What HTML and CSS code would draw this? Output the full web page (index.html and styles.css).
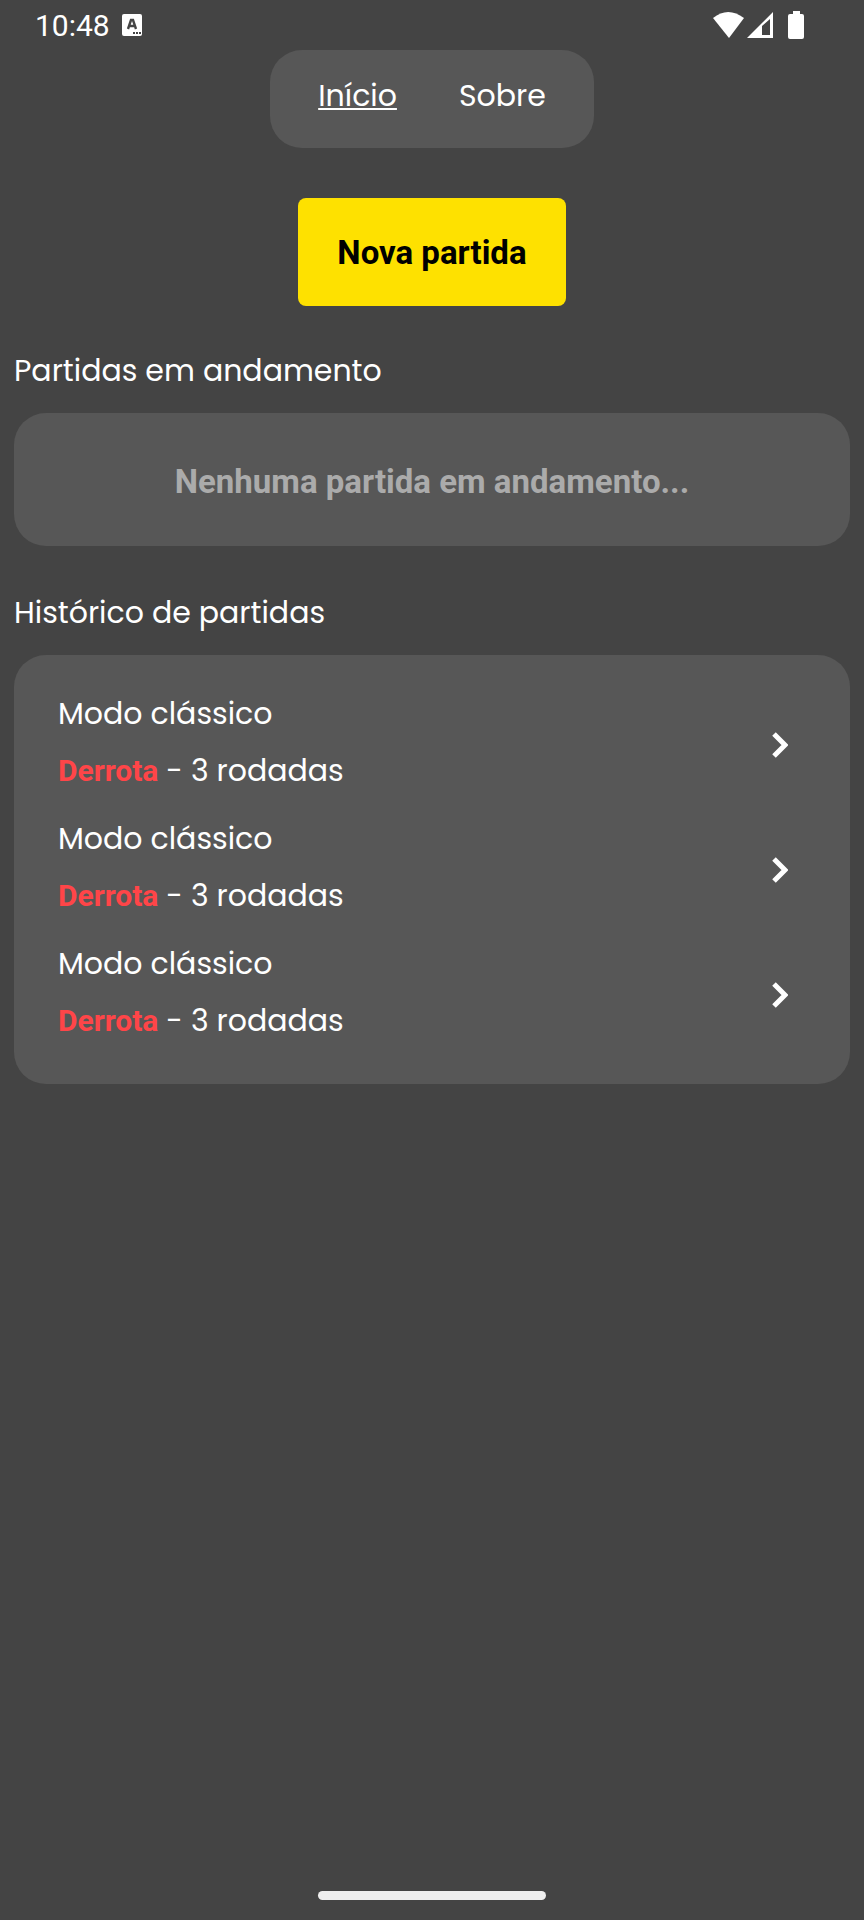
FILE: index.html
```
<!DOCTYPE html>
<html lang="pt-BR">
<head>
    <meta charset="UTF-8">
    <meta name="viewport" content="width=device-width, initial-scale=1.0">
    <title>Partidas</title>
    <link rel="stylesheet" href="styles.css">
</head>
<body>

<div class="status-bar">
    <span class="clock">10:48</span>
    <svg class="status-app" width="20" height="22" viewBox="0 0 20 22" aria-hidden="true">
        <rect width="20" height="22" rx="2" fill="#fff"/>
        <path d="M6 15 L9 6 H11 L14 15 M7 12 H13" fill="none" stroke="#444" stroke-width="2.4"/>
        <path d="M11 18 h2 v2 h-2 z M14 18 h2 v2 h-2 z M17 18 h2 v2 h-2 z" fill="#444"/>
    </svg>
    <div class="status-icons">
        <svg width="92" height="30" viewBox="0 0 92 30" aria-hidden="true">
            <path d="M0 8 Q15 -4 31 8 L16 28 Z" fill="#fff"/>
            <path d="M34 28 L60 2 V28 Z M49 16 V25 H57 V9 Z" fill="#fff" fill-rule="evenodd"/>
            <path d="M80 1 h7 v3 h2 q2 0 2 2 v21 q0 2 -2 2 h-12 q-2 0 -2 -2 v-21 q0 -2 2 -2 h3 z" fill="#fff"/>
        </svg>
    </div>
</div>

<nav class="menu">
    <a href="#" class="active">Início</a>
    <a href="#sobre">Sobre</a>
</nav>

<main>
    <button type="button" class="new-game">Nova partida</button>

    <h2>Partidas em andamento</h2>
    <div class="card empty">
        <p>Nenhuma partida em andamento...</p>
    </div>

    <h2>Histórico de partidas</h2>
    <div class="card history">
        <a href="#partida-1" class="match">
            <div>
                <p>Modo clássico</p>
                <p><strong>Derrota</strong> - 3 rodadas</p>
            </div>
            <svg width="16" height="26" viewBox="0 0 16 26" aria-hidden="true">
                <path d="M2 2 L13 13 L2 24" fill="none" stroke="#fff" stroke-width="5"/>
            </svg>
        </a>
        <a href="#partida-2" class="match">
            <div>
                <p>Modo clássico</p>
                <p><strong>Derrota</strong> - 3 rodadas</p>
            </div>
            <svg width="16" height="26" viewBox="0 0 16 26" aria-hidden="true">
                <path d="M2 2 L13 13 L2 24" fill="none" stroke="#fff" stroke-width="5"/>
            </svg>
        </a>
        <a href="#partida-3" class="match">
            <div>
                <p>Modo clássico</p>
                <p><strong>Derrota</strong> - 3 rodadas</p>
            </div>
            <svg width="16" height="26" viewBox="0 0 16 26" aria-hidden="true">
                <path d="M2 2 L13 13 L2 24" fill="none" stroke="#fff" stroke-width="5"/>
            </svg>
        </a>
    </div>
</main>

<div class="home-bar"></div>

</body>
</html>
```

FILE: styles.css
```
* {
    box-sizing: border-box;
}

body {
    margin: 0;
    min-height: 100vh;
    display: flex;
    flex-direction: column;
    background-color: #444444;
    color: #ffffff;
    font-family: Poppins, Inter, sans-serif;
    font-size: 30px;
}

p {
    margin: 0;
}

a {
    color: #ffffff;
    text-decoration: none;
}

.status-bar {
    display: flex;
    align-items: center;
    height: 50px;
    padding: 0 59px 0 35px;
    font-family: Roboto, sans-serif;
}

.status-app {
    margin-left: 12px;
}

.status-icons {
    display: flex;
    margin-left: auto;
}

.menu {
    display: flex;
    gap: 62px;
    align-self: center;
    padding: 26px 48px 32px;
    background-color: #575757;
    border-radius: 32px;
    line-height: 40px;
}

.menu .active {
    text-decoration: underline;
    text-decoration-thickness: 2px;
    text-underline-offset: 2px;
    text-decoration-skip-ink: none;
}

main {
    flex: 1;
    display: flex;
    flex-direction: column;
    padding: 50px 14px;
}

.new-game {
    align-self: center;
    padding: 35px 39px 33px;
    border: none;
    border-radius: 8px;
    background-color: #fee100;
    color: #000000;
    font-family: Roboto, sans-serif;
    font-size: 33px;
    font-weight: bold;
    line-height: 40px;
    cursor: pointer;
}

h2 {
    margin: 41px 0 18px;
    font-size: 30px;
    font-weight: normal;
    line-height: 48px;
}

.card {
    margin-bottom: 2px;
    background-color: #575757;
    border-radius: 32px;
}

.empty {
    padding: 49px 44px 44px;
    color: #ababab;
    font-family: Roboto, sans-serif;
    font-size: 33px;
    font-weight: bold;
    line-height: 40px;
    text-align: center;
}

.history {
    display: flex;
    flex-direction: column;
    gap: 11px;
    padding: 30px 62px 35px 44px;
}

.match {
    display: flex;
    align-items: center;
    justify-content: space-between;
    line-height: 57px;
}

.match svg {
    margin-top: 6px;
}

.match strong {
    color: #ff4548;
    font-family: Roboto, sans-serif;
}

.home-bar {
    align-self: center;
    width: 228px;
    height: 9px;
    margin-bottom: 20px;
    border-radius: 5px;
    background-color: #efefef;
}
```
